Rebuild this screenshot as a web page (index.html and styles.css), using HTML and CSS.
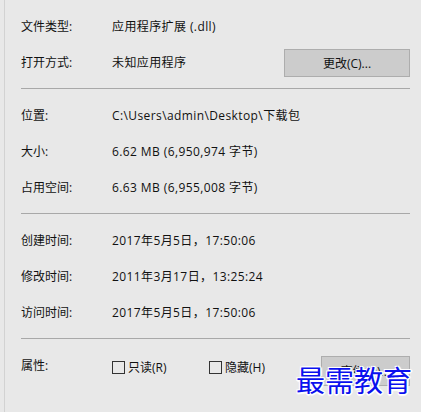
FILE: index.html
```html
<!DOCTYPE html>
<html lang="zh-CN">
<head>
    <meta charset="UTF-8">
    <title>属性</title>
    <link rel="stylesheet" href="styles.css">
</head>
<body>
    <div class="panel">
        <div class="section first">
            <div class="row">
                <span class="label">文件类型:</span>
                <span class="value">应用程序扩展 (.dll)</span>
            </div>
            <div class="row">
                <span class="label">打开方式:</span>
                <span class="value grow">未知应用程序</span>
                <button class="button change-btn">更改(C)...</button>
            </div>
        </div>
        <div class="divider"></div>
        <div class="section">
            <div class="row">
                <span class="label">位置:</span>
                <span class="value">C:\Users\admin\Desktop\下载包</span>
            </div>
            <div class="row">
                <span class="label">大小:</span>
                <span class="value">6.62 MB (6,950,974 字节)</span>
            </div>
            <div class="row">
                <span class="label">占用空间:</span>
                <span class="value">6.63 MB (6,955,008 字节)</span>
            </div>
        </div>
        <div class="divider"></div>
        <div class="section">
            <div class="row">
                <span class="label">创建时间:</span>
                <span class="value">2017年5月5日，17:50:06</span>
            </div>
            <div class="row">
                <span class="label">修改时间:</span>
                <span class="value">2011年3月17日，13:25:24</span>
            </div>
            <div class="row">
                <span class="label">访问时间:</span>
                <span class="value">2017年5月5日，17:50:06</span>
            </div>
        </div>
        <div class="divider"></div>
        <div class="section">
            <div class="row attr-row">
                <span class="label">属性:</span>
                <label class="check"><span class="box"></span>只读(R)</label>
                <label class="check hidden-check"><span class="box"></span>隐藏(H)</label>
                <button class="button adv-btn">高级(D)...</button>
            </div>
        </div>
    </div>
    <div class="watermark">最需教育</div>
</body>
</html>
```

FILE: styles.css
```css
body {
    margin: 0;
    padding: 0;
    background-color: #e8e8e8;
    font-family: "Open Sans", "Noto Sans CJK SC", sans-serif;
    font-size: 12px;
    color: #111;
    height: 412px;
    overflow: hidden;
    position: relative;
}
.panel {
    margin-left: 4px;
    border-left: 1px solid #d2d2d2;
    height: 412px;
    padding: 0 11px 0 16px;
}
.section {
    padding: 8px 0;
}
.row {
    display: flex;
    align-items: center;
    height: 36px;
}
.label {
    width: 91px;
    flex-shrink: 0;
}
.value {
    letter-spacing: 0.4px;
}
.grow {
    flex: 1;
}
.divider {
    height: 1px;
    background-color: #a8a8a8;
}
.button {
    font-family: inherit;
    font-size: 12px;
    color: #111;
    background-color: #cccccc;
    border: 1px solid #adadad;
    padding: 0;
}
.change-btn {
    width: 126px;
    height: 28px;
    margin-top: 2px;
}
.check {
    display: flex;
    align-items: center;
    margin-top: 4px;
}
.box {
    width: 11px;
    height: 11px;
    border: 1px solid #333;
    margin-right: 3px;
}
.check:first-of-type {
    width: 98px;
}
.hidden-check {
    width: 113px;
}
.adv-btn {
    width: 90px;
    height: 30px;
    margin-top: 12px;
}
.watermark {
    position: absolute;
    left: 296px;
    top: 359px;
    font-family: "Noto Sans CJK SC", sans-serif;
    font-size: 29px;
    line-height: 40px;
    letter-spacing: 0;
    color: #0a10ee;
    text-shadow: 1px 1px 0 #fff, -1px -1px 0 #fff, 1px -1px 0 #fff, -1px 1px 0 #fff, 0 2px 1px #fff, 2px 0 1px #fff;
}
```
